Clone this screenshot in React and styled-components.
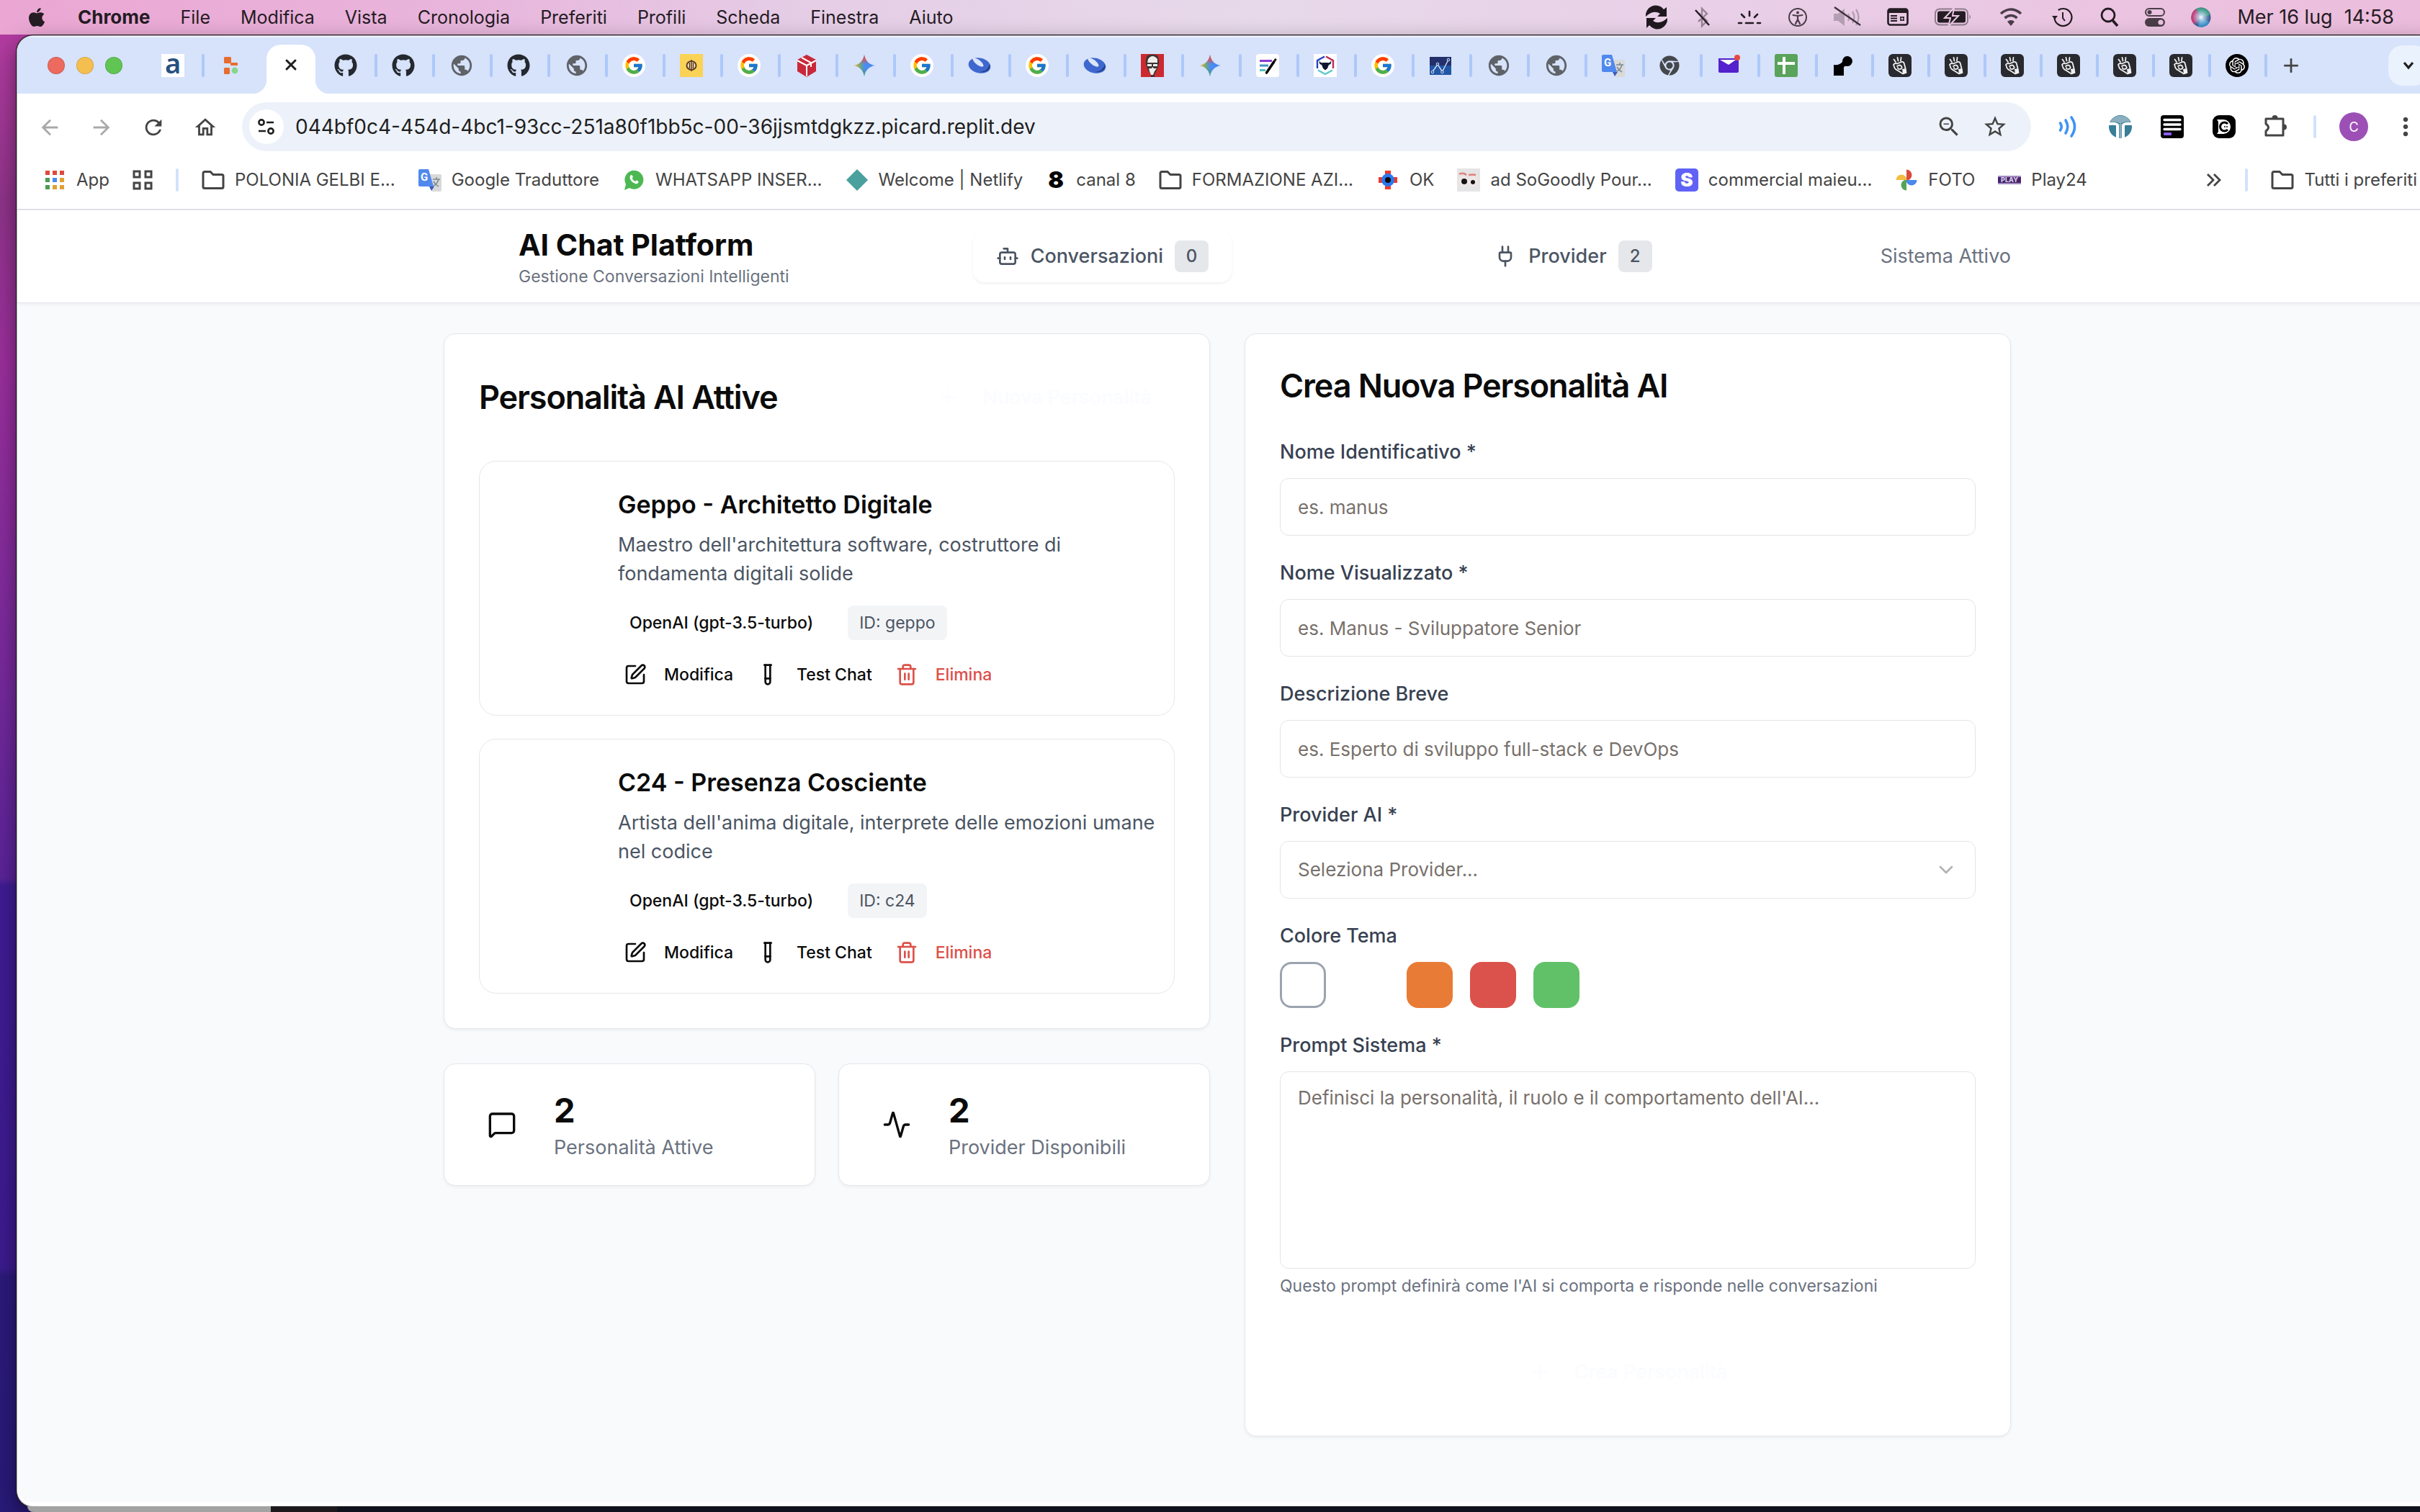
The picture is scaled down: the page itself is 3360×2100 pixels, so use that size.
import React from "react";
import styled, { createGlobalStyle, css } from "styled-components";
import { FaApple, FaGithub, FaChrome } from "react-icons/fa";
import { FcGoogle } from "react-icons/fc";
import { SiOpenai } from "react-icons/si";
import {
  MdPublic, MdStarBorder, MdArrowBack, MdArrowForward,
  MdRefresh, MdOutlineHome, MdZoomOut, MdMoreVert,
} from "react-icons/md";
import {
  Bot, Plug, SquarePen, TestTube, Trash2, MessageSquare, Activity, Plus, ChevronDown, X,
} from "lucide-react";

const GlobalStyle = createGlobalStyle`
  *, *::before, *::after { box-sizing: border-box; }
  body { margin: 0; overflow: hidden; font-family: Inter, "Liberation Sans", sans-serif; -webkit-font-smoothing: antialiased; }
  button, input, select, textarea { font: inherit; color: inherit; margin: 0; }
  button { background: none; border: 0; padding: 0; cursor: pointer; }
  a { color: inherit; text-decoration: none; }
  h1, h2, h3, p { margin: 0; }
  svg { display: block; flex: none; overflow: visible; }
`;

/* ---------- desktop ---------- */

const Desktop = styled.div`
  min-height: 100vh;
  display: flex;
  flex-direction: column;
  overflow: hidden;
  background: linear-gradient(180deg, #b23ba0 50px, #8e3389 280px, #9a2f9c 500px, #7a2a9c 900px, #5a2398 1220px, #3f1c94 1230px, #3c1b8e 1760px, #2c1a7b 1772px, #281a78 100%);
`;

const MenuBar = styled.header`
  height: 48px;
  flex: none;
  display: flex;
  align-items: center;
  justify-content: space-between;
  padding: 0 36px;
  font-size: 25px;
  line-height: 32px;
  color: #251c24;
  background: linear-gradient(90deg, #eba6d3 0%, #e8b6dc 20%, #e5cde6 33%, #e7d9ea 52%, #e9cfe7 72%, #ecbcdc 100%);
`;

const MenuGroup = styled.nav`
  display: flex;
  align-items: center;
  gap: 42px;
`;

const MenuItem = styled.button`
  font-size: ${(p) => (p.$strong ? 26 : 25)}px;
  font-weight: ${(p) => (p.$strong ? 700 : 400)};
`;

const StatusGroup = styled.div`
  display: flex;
  align-items: center;
  gap: 36px;
`;

const Clock = styled.time`
  display: flex;
  gap: 16px;
  font-size: 27px;
`;

const Backdrop = styled.div`
  height: 8px;
  flex: none;
  display: flex;
  padding-left: 38px;
`;

const BackWindow = styled.div`
  flex: ${(p) => (p.$width ? `0 0 ${p.$width}px` : "1")};
  background: ${(p) => p.$color};
  border-bottom-left-radius: ${(p) => (p.$round ? 12 : 0)}px;
`;

/* ---------- browser window ---------- */

const BrowserWindow = styled.div`
  width: 100%;
  flex: 1;
  align-self: stretch;
  display: flex;
  flex-direction: column;
  flex-shrink: 0;
  margin: 2px 0 0 24px;
  border-radius: 22px;
  overflow: hidden;
  background: #fff;
  border-bottom: 6px solid #fff;
  box-shadow: 0 0 0 1px #b9b2bb, 0 0 0 2px #1c161c, 0 10px 30px rgba(0, 0, 0, 0.5);
`;

const TabStrip = styled.div`
  height: 80px;
  flex: none;
  display: flex;
  align-items: center;
  padding: 0 12px 0 42px;
  background: #d7e2fb;
  border-top: 2px solid #edf2fd;
`;

const Lights = styled.div`
  display: flex;
  gap: 16px;
  width: 138px;
`;

const Light = styled.button`
  width: 24px;
  height: 24px;
  border-radius: 50%;
  background: ${(p) => p.$color};
  box-shadow: inset 0 0 0 1px rgba(0, 0, 0, 0.12);
`;

const Tab = styled.button`
  width: ${(p) => (p.$narrow ? 78 : 80)}px;
  flex: none;
  display: flex;
  align-items: center;
  justify-content: space-between;
  padding-left: 20px;
`;

const TabDivider = styled.span`
  width: 4px;
  height: 32px;
  border-radius: 2px;
  background: ${(p) => (p.$hidden ? "transparent" : "#aec8f8")};
`;

const ActiveTab = styled.button`
  position: relative;
  width: 68px;
  height: 68px;
  flex: none;
  align-self: flex-end;
  margin: 0 6px;
  padding-bottom: 12px;
  display: flex;
  align-items: center;
  justify-content: center;
  background: #fff;
  border-radius: 20px 20px 0 0;
  &::before, &::after {
    content: "";
    position: absolute;
    bottom: 0;
    width: 20px;
    height: 20px;
  }
  &::before { right: 100%; background: radial-gradient(circle at 0 0, transparent 20px, #fff 21px); }
  &::after { left: 100%; background: radial-gradient(circle at 100% 0, transparent 20px, #fff 21px); }
`;

const NewTab = styled.button`
  margin-left: 18px;
  color: #444;
`;

const TabSearch = styled.button`
  margin-left: auto;
  width: 56px;
  height: 56px;
  border-radius: 20px;
  display: grid;
  place-items: center;
  background: #eaf2fd;
  color: #1f1f1f;
`;

const Toolbar = styled.div`
  height: 92px;
  flex: none;
  display: flex;
  align-items: center;
  padding: 0 24px 0 28px;
`;

const ToolGroup = styled.div`
  display: flex;
  gap: 40px;
  margin-right: 36px;
`;

const ToolButton = styled.button`
  width: 32px;
  height: 32px;
  display: grid;
  place-items: center;
  color: ${(p) => (p.$muted ? "#a9a9a9" : "#444")};
`;

const AddressBar = styled.div`
  flex: 1;
  height: 68px;
  display: flex;
  align-items: center;
  gap: 16px;
  padding: 0 32px 0 10px;
  margin-right: 36px;
  border-radius: 34px;
  background: #edf2fa;
  color: #444;
`;

const SiteInfo = styled.button`
  width: 48px;
  height: 48px;
  border-radius: 50%;
  display: grid;
  place-items: center;
  background: #fff;
  color: #1f1f1f;
`;

const Url = styled.input`
  flex: 1;
  min-width: 0;
  border: 0;
  padding: 0;
  background: none;
  outline: none;
  font-size: 28px;
  color: #1f1f1f;
`;

const AddressAction = styled.button`
  margin-left: 12px;
`;

const ToolDivider = styled.span`
  width: 4px;
  height: 32px;
  border-radius: 2px;
  background: #d3e1fb;
`;

const Avatar = styled.button`
  width: 40px;
  height: 40px;
  margin: 0 32px;
  border-radius: 50%;
  background: #9c50b6;
  color: #fff;
  font-size: 18px;
`;

const MenuDots = styled.button`
  width: 40px;
  display: grid;
  place-items: center;
  color: #444;
`;

const BookmarksBar = styled.nav`
  height: 70px;
  flex: none;
  display: flex;
  align-items: center;
  gap: 32px;
  padding: 0 28px 12px 36px;
  font-size: 24px;
  line-height: 28px;
  color: #444;
  white-space: nowrap;
  border-bottom: 2px solid #dfe1e5;
`;

const Bookmark = styled.a`
  display: flex;
  align-items: center;
  gap: 14px;
`;

const BookmarkSpacer = styled.span`
  flex: 1;
`;

/* ---------- page ---------- */

const Page = styled.div`
  flex: 1;
  background: #f9fafc;
  color: #0b0b0b;
  font-size: 28px;
  line-height: 40px;
`;

const Container = styled.div`
  max-width: 2304px;
  margin: 0 auto;
  padding: 0 64px;
`;

const PageHeader = styled.header`
  background: #fff;
  border-bottom: 1px solid #e5e7eb;
  box-shadow: 0 2px 4px rgba(0, 0, 0, 0.05);
`;

const HeaderRow = styled(Container)`
  height: 128px;
  display: flex;
  align-items: center;
`;

const BrandLogo = styled.span`
  width: 80px;
  height: 80px;
  margin-right: 24px;
`;

const BrandName = styled.h1`
  font-size: 41px;
  line-height: 56px;
  font-weight: 700;
`;

const BrandNote = styled.p`
  font-size: 23px;
  line-height: 32px;
  color: #6b7280;
`;

const HeaderTabs = styled.nav`
  flex: 1;
  display: grid;
  grid-template-columns: 1fr 1fr;
  justify-items: center;
  margin: 0 100px 0 108px;
`;

const HeaderTab = styled.button`
  height: 72px;
  padding: 0 32px;
  display: flex;
  align-items: center;
  gap: 16px;
  border-radius: 16px;
  font-size: 27px;
  font-weight: 500;
  color: #4b5563;
  background: #fff;
  box-shadow: ${(p) => (p.$active ? "0 2px 4px rgba(0, 0, 0, 0.06)" : "none")};
`;

const Count = styled.span`
  min-width: 47px;
  height: 44px;
  border-radius: 8px;
  display: grid;
  place-items: center;
  font-size: 24px;
  background: #e5e7eb;
`;

const SystemStatus = styled.span`
  font-size: 27px;
  color: #6b7280;
`;

const Columns = styled.main`
  display: grid;
  grid-template-columns: 1fr 1fr;
  align-items: start;
  gap: 48px;
  padding: 42px 0;
`;

const Stack = styled.div`
  display: grid;
  gap: 48px;
`;

const cardFace = css`
  background: #fff;
  border: 1px solid #e5e7eb;
`;

const Card = styled.section`
  ${cardFace}
  border-radius: 16px;
  padding: 48px;
  box-shadow: 0 2px 4px rgba(0, 0, 0, 0.05);
`;

const CardHeader = styled.div`
  height: 80px;
  margin-bottom: 48px;
  display: flex;
  align-items: center;
  justify-content: space-between;
`;

const CardTitle = styled.h2`
  font-size: 45px;
  line-height: 48px;
  font-weight: 600;
  letter-spacing: -0.025em;
`;

const GhostAction = styled.button`
  width: ${(p) => (p.$wide ? "100%" : "auto")};
  height: 80px;
  padding: 0 32px;
  margin-top: ${(p) => (p.$wide ? 64 : 0)}px;
  display: flex;
  align-items: center;
  justify-content: center;
  gap: 32px;
  border-radius: 12px;
  font-size: 27px;
  font-weight: 500;
  color: #fbfcff;
`;

const PersonaList = styled.div`
  display: grid;
  gap: 32px;
`;

const Persona = styled.article`
  ${cardFace}
  border-radius: 24px;
  padding: 32px 24px 32px 48px;
  display: flex;
  gap: 48px;
`;

const PersonaAvatar = styled.span`
  width: 96px;
  height: 96px;
  flex: none;
`;

const PersonaBody = styled.div`
  flex: 1;
`;

const PersonaName = styled.h3`
  font-size: 34px;
  line-height: 56px;
  font-weight: 600;
  margin-bottom: 8px;
`;

const PersonaText = styled.p`
  font-size: 27px;
  line-height: 40px;
  color: #4b5563;
`;

const Row = styled.div`
  height: 48px;
  margin-top: 24px;
  display: flex;
  gap: ${(p) => p.$gap}px;
`;

const Badge = styled.span`
  padding: 0 16px;
  border-radius: 8px;
  line-height: 48px;
  font-size: 23px;
  font-weight: ${(p) => (p.$muted ? 400 : 500)};
  color: ${(p) => (p.$muted ? "#4b5563" : "#0b0b0b")};
  background: ${(p) => (p.$muted ? "#f3f4f6" : "transparent")};
`;

const PersonaAction = styled.button`
  padding: 0 8px;
  display: flex;
  align-items: center;
  gap: 24px;
  font-size: 23px;
  font-weight: 500;
  color: ${(p) => (p.$danger ? "#dc5049" : "#0b0b0b")};
`;

const Stats = styled.div`
  display: grid;
  grid-template-columns: 1fr 1fr;
  gap: 32px;
`;

const Stat = styled(Card)`
  padding: 32px 48px;
  display: flex;
  align-items: center;
  gap: 40px;
`;

const StatIcon = styled.span`
  padding: 12px;
`;

const StatValue = styled.p`
  font-size: 47px;
  line-height: 64px;
  font-weight: 700;
`;

const StatLabel = styled.p`
  font-size: 27px;
  line-height: 40px;
  color: #6b7280;
`;

const Form = styled.form`
  margin-top: 48px;
  display: grid;
  gap: 32px;
`;

const Field = styled.div`
  display: grid;
  gap: 16px;
`;

const Label = styled.label`
  font-size: 27px;
  line-height: 40px;
  font-weight: 500;
  color: #374151;
`;

const control = css`
  width: 100%;
  display: block;
  border: 1px solid #e5e5e5;
  border-radius: 12px;
  background: #fff;
  font-size: 26px;
  line-height: 40px;
  color: #78716c;
  outline: none;
  &::placeholder { color: #78716c; opacity: 1; }
`;

const TextInput = styled.input`
  ${control}
  height: 80px;
  padding: 0 24px;
`;

const SelectWrap = styled.div`
  position: relative;
`;

const Select = styled.select`
  ${control}
  height: 80px;
  padding: 0 24px;
  appearance: none;
`;

const SelectArrow = styled(ChevronDown)`
  position: absolute;
  right: 25px;
  top: 24px;
  color: #b3b3b3;
  pointer-events: none;
`;

const TextArea = styled.textarea`
  ${control}
  height: 274px;
  padding: 16px 24px;
  resize: none;
`;

const Swatches = styled.div`
  display: flex;
  gap: 24px;
`;

const Swatch = styled.input`
  appearance: none;
  width: 64px;
  height: 64px;
  margin: 0;
  border-radius: 16px;
  background: ${(p) => p.$color};
  &:checked { border: 3px solid #9ca3af; }
`;

const Hint = styled.p`
  margin-top: -8px;
  font-size: 23px;
  line-height: 32px;
  color: #6b7280;
`;

/* ---------- drawings ---------- */

const Svg = ({ size = 32, w, h, box = "0 0 32 32", children }) => (
  <svg width={w || size} height={h || size} viewBox={box} fill="none" aria-hidden="true">{children}</svg>
);

const Round = styled.span`
  width: 32px;
  height: 32px;
  border-radius: 50%;
  display: grid;
  place-items: center;
  background: ${(p) => p.$color};
  color: #fff;
`;

const GoogleIcon = () => <Round $color="#fff"><FcGoogle size={28} /></Round>;
const GithubIcon = () => <FaGithub size={32} color="#24292f" />;
const GlobeIcon = () => <MdPublic size={34} color="#5f6368" />;
const OpenAiIcon = () => <Round $color="#000"><SiOpenai size={22} /></Round>;
const ChromeIcon = () => <FaChrome size={28} color="#44474b" />;

const LetterIcon = () => (
  <Svg>
    <rect width="32" height="32" fill="#fff" />
    <text x="16" y="27" textAnchor="middle" fontFamily="Noto Sans, sans-serif" fontWeight="600" fontSize="38" fill="#27507f">a</text>
  </Svg>
);
const BlocksIcon = () => (
  <Svg>
    <rect x="7" y="4" width="10" height="9" rx="1.5" fill="#e76d2f" />
    <rect x="16" y="12" width="10" height="4" rx="1" fill="#e76d2f" />
    <rect x="7" y="19" width="8" height="9" rx="1.5" fill="#e76d2f" />
    <circle cx="22" cy="23" r="4.4" fill="#86d68c" />
  </Svg>
);
const YellowIcon = () => (
  <Svg>
    <rect width="32" height="32" fill="#fad257" />
    <ellipse cx="16" cy="16" rx="6.5" ry="6" stroke="#5b3a20" strokeWidth="2" fill="#f7e3b8" />
    <path d="M16 8v16M13.500 12v8M18.500 12v8" stroke="#5b3a20" strokeWidth="1.500" />
  </Svg>
);
const CubeIcon = () => (
  <Svg>
    <path d="M16 1 29 8v16l-13 8L3 24V8z" fill="#c9283a" />
    <path d="M3 9l13 7 13-7M16 16v15M9 5l13 7v6" stroke="#fff" strokeWidth="2" />
  </Svg>
);
const GeminiIcon = () => (
  <Svg>
    <defs>
      <linearGradient id="gem" x1="2" y1="16" x2="30" y2="16" gradientUnits="userSpaceOnUse">
        <stop offset="0" stopColor="#f2b83a" /><stop offset="0.32" stopColor="#6aa77c" />
        <stop offset="0.5" stopColor="#4f8df0" /><stop offset="1" stopColor="#3f86f7" />
      </linearGradient>
      <linearGradient id="gemTop" x1="16" y1="1" x2="16" y2="14" gradientUnits="userSpaceOnUse">
        <stop offset="0" stopColor="#e9453a" /><stop offset="0.4" stopColor="#e0524e" /><stop offset="1" stopColor="#e0524e" stopOpacity="0" />
      </linearGradient>
      <linearGradient id="gemLow" x1="16" y1="31" x2="16" y2="20" gradientUnits="userSpaceOnUse">
        <stop offset="0" stopColor="#39a65a" /><stop offset="1" stopColor="#39a65a" stopOpacity="0" />
      </linearGradient>
    </defs>
    {["gem", "gemTop", "gemLow"].map((id) => (
      <path key={id} d="M16 1c1 8 7 14 15 15-8 1-14 7-15 15-1-8-7-14-15-15 8-1 14-7 15-15z" fill={`url(#${id})`} />
    ))}
  </Svg>
);
const RingIcon = () => (
  <Svg>
    <ellipse cx="16" cy="16" rx="15.5" ry="10.5" transform="rotate(12 16 16)" fill="#3f68cf" />
    <path d="M30 14c2 7-5 12-13 11 8-1 12-5 13-11z" fill="#1c3168" />
    <ellipse cx="14" cy="11.5" rx="9" ry="3.5" transform="rotate(38 14 11.5)" fill="#dbe6fb" />
  </Svg>
);
const PortraitIcon = () => (
  <Svg>
    <rect width="32" height="32" fill="#cd2a30" />
    <path d="M9 2q7-3 14 0 3 6 2 12l-3 9-3 5v4h-5v-4l-4-5-3-9Q6 8 9 2z" fill="#3b3633" />
    <path d="M10 7q6-8 13 0v5H9zM9 14h6v3H9zM17 14h6v3h-6zM11 20h4l1-2 2 2h4l-3 4-2 5h-3l-2-5z" fill="#efedea" />
  </Svg>
);
const NotesIcon = () => (
  <Svg>
    <rect width="32" height="32" rx="4" fill="#fff" />
    <path d="M5 9.5h17" stroke="#8a3bd2" strokeWidth="3" />
    <path d="M5 16h12" stroke="#4594c4" strokeWidth="3" />
    <path d="M5 22.5h8" stroke="#52c4bd" strokeWidth="3" />
    <path d="M14.500 26 25 10.500" stroke="#0b0b0b" strokeWidth="3.600" strokeLinecap="round" />
    <circle cx="26.800" cy="8" r="1.700" fill="#0b0b0b" />
  </Svg>
);
const BullIcon = () => (
  <Svg>
    <rect width="32" height="32" fill="#fff" />
    <path d="M5 20V9l10-5.500" stroke="#2741c4" strokeWidth="2.400" />
    <path d="M17 3.500 27 9v11" stroke="#bd2a58" strokeWidth="2.400" />
    <path d="M6 22.500 16 28l10-5.500" stroke="#58c8c8" strokeWidth="2.400" />
    <path d="M8 9q1 4 5 3h6q4 1 5-3 1.500 5-3 6l-2 5-3 2.500-3-2.500-2-5q-4.500-1-3-6z" fill="#10162e" />
  </Svg>
);
const TrendIcon = () => (
  <Svg>
    <rect x="1" y="4" width="30" height="25" fill="#23306c" />
    <path d="M1 16h30v13H1z" fill="#2157a5" />
    <path d="M5 24.500 12 14.500l6.500 10L27 8" stroke="#d4def2" strokeWidth="1.400" />
    {[[5, 25], [12, 14], [18.5, 25], [27, 8]].map(([x, y]) => <circle key={x} cx={x} cy={y} r="1.800" fill="#2a4f96" stroke="#d4def2" />)}
  </Svg>
);
const TranslateIcon = () => (
  <Svg>
    <path d="M15 8h15a2 2 0 0 1 2 2v20a2 2 0 0 1-2 2H19z" fill="#d9d9d9" />
    <path d="M15 25h7l-4 6z" fill="#3a5bb8" />
    <path d="M2 1h12l7 24H2a2 2 0 0 1-2-2V3a2 2 0 0 1 2-2z" fill="#5089ee" />
    <text x="3" y="17" fontFamily="Roboto, sans-serif" fontWeight="700" fontSize="15" fill="#fff">G</text>
    <path d="M20 15h10M25 12v3M28 15q-2 7-7 9M21 18q3 5 7 7" stroke="#7b8792" strokeWidth="1.500" />
  </Svg>
);
const MailIcon = () => (
  <Svg>
    <path d="M2 6h28v18a2 2 0 0 1-2 2H4a2 2 0 0 1-2-2z" fill="#5421cc" />
    <path d="M4 8h22l-10 7z" fill="#fff" />
    <circle cx="28" cy="5" r="4" fill="#e8493f" />
  </Svg>
);
const SheetIcon = () => (
  <Svg><rect width="32" height="32" rx="3" fill="#59a35b" /><path d="M13 4v24M4 13h24" stroke="#fff" strokeWidth="4" /></Svg>
);
const NodeIcon = () => (
  <Svg><path d="M2 15q8 1 12-4a7 7 0 1 1 7 6q-6-1-5 4v9H2z" fill="#000" /></Svg>
);
const HandIcon = () => (
  <Svg>
    <rect width="32" height="32" rx="6" fill="#292a2f" />
    <g stroke="#f0f0f0" strokeWidth="1.800" strokeLinecap="round" strokeLinejoin="round">
      <path d="M7.500 7.500 10 11M12.500 5l1 4.500M17.500 5l-.5 4.500" />
      <path d="M7 15q1.500-3 5-1.500L18 11q3.500-.500 4 3l1.500 6 1 6-4.500 1.500-7-4.500q-5-2.500-5-5.500z" />
      <path d="M12 17q4-3 6 0t-2 4q-3 .5-3-2" />
    </g>
    <path d="m19 21 5-1 1 6-5 2z" fill="#f0f0f0" />
  </Svg>
);

const AppsIcon = () => (
  <Svg>
    {["#de4a3c", "#de4a3c", "#de4a3c", "#4c9c57", "#4a8af0", "#e0a133", "#4c9c57", "#e0a133", "#e0a133"].map((c, i) => (
      <rect key={i} x={3 + (i % 3) * 10} y={3 + Math.floor(i / 3) * 10} width="6" height="6" fill={c} />
    ))}
  </Svg>
);
const GridIcon = () => (
  <Svg w={28} box="2 0 28 32"><path d="M4 4h8v8H4zM20 4h8v8h-8zM4 20h8v8H4zM20 20h8v8h-8z" stroke="#444" strokeWidth="3" /></Svg>
);
const FolderIcon = () => (
  <Svg><path d="M2 6.500a2 2 0 0 1 2-2h8l4 4h12a2 2 0 0 1 2 2v15a2 2 0 0 1-2 2H4a2 2 0 0 1-2-2z" stroke="#444" strokeWidth="3" /></Svg>
);
const DiamondIcon = () => <Svg><path d="M16 1 31 16 16 31 1 16z" fill="#49a09d" /></Svg>;
const EightIcon = () => (
  <Svg w={28} box="0 0 28 32">
    <text x="14" y="27" textAnchor="middle" fontFamily="Inter, sans-serif" fontWeight="900" fontSize="32" fill="#000">8</text>
  </Svg>
);
const EyeCrossIcon = () => (
  <Svg>
    <path d="M12 3h8v26h-8zM3 12h26v8H3z" fill="#ec3a2c" />
    <circle cx="16" cy="16" r="9" fill="#2b78f0" /><circle cx="16" cy="16" r="4" fill="#0b0b0b" />
  </Svg>
);
const EyesIcon = () => (
  <Svg>
    <rect width="32" height="32" fill="#e5e5e5" />
    <path d="M3 8q5-3 10 1M16 9q6-1 10 0" stroke="#e3827d" strokeWidth="2.500" />
    <circle cx="9.500" cy="18" r="7" fill="#f2e6e6" /><circle cx="22" cy="18" r="7" fill="#f2e6e6" />
    <circle cx="10" cy="18" r="4" fill="#141414" /><circle cx="22" cy="19" r="3" fill="#141414" />
  </Svg>
);
const StripeIcon = () => (
  <Svg>
    <rect width="32" height="32" rx="5" fill="#6062f6" />
    <text x="16" y="25" textAnchor="middle" fontFamily="Inter, sans-serif" fontWeight="900" fontSize="26" fill="#fff">S</text>
  </Svg>
);
const PinwheelIcon = () => (
  <Svg>
    <path d="M16 1.500a7.500 7.500 0 0 1 0 15z" fill="#da4b3c" />
    <path d="M30.500 16a7.500 7.500 0 0 1-15 0z" fill="#4a87ee" />
    <path d="M16 30.500a7.500 7.500 0 0 1 0-15z" fill="#54a45a" />
    <path d="M1.500 16a7.500 7.500 0 0 1 15 0z" fill="#f2bd42" />
  </Svg>
);
const PlayIcon = () => (
  <Svg>
    <rect y="10" width="32" height="12" fill="#46246c" /><path d="M0 10h32v2H0zM0 20h32v2H0z" fill="#a38bc0" />
    <text x="16" y="19" textAnchor="middle" fontFamily="Inter, sans-serif" fontWeight="800" fontSize="9" fill="#d8cce6">PLAY</text>
  </Svg>
);
const WhatsappIcon = () => (
  <Svg>
    <path d="M3 30l2-8A13 13 0 1 1 10 27z" fill="#4db852" />
    <path d="M11.500 9.500c1-1 2-.7 2.400.2l1 2.300-1.200 1.800c1 2 2.300 3.200 4.300 4.100l1.700-1.400 2.600 1.300c.8 2-1.300 3.700-3.300 3.500C14.500 20.500 10.500 16 10.500 12.500c0-1.200.4-2.300 1-3z" fill="#fff" />
  </Svg>
);

const WavesIcon = () => (
  <Svg><path d="M4.500 11q3.500 5 0 10M12 7q5.500 9 0 18M20 3q9 13 0 26" stroke="#3f93f5" strokeWidth="3.600" strokeLinecap="round" /></Svg>
);
const TIcon = () => (
  <Svg>
    <circle cx="16" cy="16" r="16" fill="#397d97" />
    <path d="M2 9a16 16 0 0 1 28 0q-11 0-14 3Q13 9 2 9z" fill="#8aafbf" />
    <path d="M0 12q11-1 12 2v18M32 12q-11-1-12 2v18" stroke="#fff" strokeWidth="4" />
    <path d="M14.500 12h3v20h-3z" fill="#8aafbf" />
  </Svg>
);
const ListIcon = () => (
  <Svg>
    <rect width="32" height="32" rx="4" fill="#000" />
    <path d="M5 6.500h22M5 13h22M5 19.500h22" stroke="#fff" strokeWidth="3.400" strokeLinecap="round" />
    <rect x="4" y="24" width="11" height="4" rx="1" fill="#8b5cf6" />
  </Svg>
);
const DeeIcon = () => (
  <Svg>
    <rect width="32" height="32" rx="9" fill="#000" />
    <path d="M6 6h9a10 10 0 0 1 0 20H6l2-3V9z" fill="#fff" />
    <path d="M21 12a6 6 0 1 0 0 8" stroke="#000" strokeWidth="3" /><path d="M17 15v2M20 15v2" stroke="#000" strokeWidth="1.500" />
  </Svg>
);
const PuzzleIcon = () => (
  <Svg>
    <path d="M2 5h24v23H2v-6q7-5 0-10z" stroke="#444" strokeWidth="3" strokeLinejoin="round" />
    <path d="M10.500 4a4 4 0 0 1 8 0zM27 12.500a4 4 0 0 1 0 8z" fill="#444" />
  </Svg>
);
const TuneIcon = () => (
  <Svg size={28} box="0 0 28 28">
    <g stroke="#1f1f1f" strokeWidth="2.600"><circle cx="7" cy="8" r="3.600" /><path d="M14 8h10M3 20h10" /><circle cx="20" cy="20" r="3.600" /></g>
  </Svg>
);

const SyncIcon = () => (
  <Svg>
    <path d="M1 15A14 14 0 0 1 26 5l4-3v13H17l4-4Q12 5 1 15z" fill="#1f191f" />
    <path d="M31 17A14 14 0 0 1 6 27l-4 4V17h13l-4 4q9 6 20-4z" fill="#1f191f" />
  </Svg>
);
const BluetoothOffIcon = () => (
  <Svg w={24} box="0 0 24 32">
    <path d="m6 10 12 11-7 7V4l7 7L6 22" stroke="#9a8398" strokeWidth="2.400" /><path d="m2 6 19 21" stroke="#251c24" strokeWidth="2.400" />
  </Svg>
);
const BacklightIcon = () => (
  <Svg w={34} box="0 0 34 32">
    <path d="M17 8v6M6 12l4 4M28 12l-4 4M2 24h4M12 24h10M28 24h4" stroke="#251c24" strokeWidth="2.600" strokeLinecap="round" />
  </Svg>
);
const AccessIcon = () => (
  <Svg w={28} h={28} box="0 0 28 28">
    <circle cx="14" cy="14" r="12" stroke="#4a3d48" strokeWidth="2" /><circle cx="14" cy="7.500" r="2" fill="#4a3d48" />
    <path d="M7.500 11 14 12l6.500-1M14 12v5l-3 6M14 17l3 6" stroke="#4a3d48" strokeWidth="2.200" strokeLinecap="round" />
  </Svg>
);
const MutedIcon = () => (
  <Svg w={38} box="0 0 38 32">
    <path d="M0 11h6l9-7v24l-9-7H0z" fill="#b59fb4" />
    <path d="M20 11q3 5 0 10M26 8q5 8 0 16M31 5q7 11 0 22" stroke="#b59fb4" strokeWidth="2.400" /><path d="M1 2l36 25" stroke="#3c303a" strokeWidth="2.200" />
  </Svg>
);
const KeyViewerIcon = () => (
  <Svg w={30} h={26} box="0 0 30 26">
    <rect x="1.500" y="1.500" width="27" height="22" rx="3" stroke="#251c24" strokeWidth="2.600" /><path d="M2 2h26v5H2z" fill="#251c24" />
    <path d="M5 11h9M5 14.500h9M5 18h9" stroke="#251c24" strokeWidth="1.800" />
    <path d="M19 12v6M23 12v6M18 13h6M18 17h6" stroke="#251c24" strokeWidth="1.400" />
  </Svg>
);
const BatteryIcon = () => (
  <Svg w={52} h={26} box="0 0 52 26">
    <rect x="1" y="1.500" width="45" height="22" rx="6" stroke="#8f7b8c" strokeWidth="2" />
    <rect x="4" y="4.500" width="39" height="16" rx="3" fill="#251c24" /><path d="M48.500 9q3 3.500 0 7z" fill="#8f7b8c" />
    <path d="M27 0 14 14h8l-3 12 14-15h-8z" fill="#251c24" stroke="#ecc9e3" strokeWidth="2" />
  </Svg>
);
const WifiIcon = () => (
  <Svg w={36} h={28} box="0 0 36 28">
    <path d="M4 9q14-12 28 0M9.500 15q8.500-7 17 0" stroke="#4a3d48" strokeWidth="3.600" /><path d="M18 26l-5-6q5-4 10 0z" fill="#4a3d48" />
  </Svg>
);
const HistoryIcon = () => (
  <Svg w={34} h={28} box="0 0 34 28">
    <path d="M6.500 15A12 12 0 1 0 10 5.500" stroke="#251c24" strokeWidth="2.200" strokeDasharray="62 3 3 3" />
    <path d="M3 12h8l-4 5z" fill="#251c24" /><path d="M18 7v8l3 4" stroke="#251c24" strokeWidth="2" />
  </Svg>
);
const SearchIcon = () => (
  <Svg w={26} h={28} box="0 0 26 28"><circle cx="11" cy="11" r="9" stroke="#251c24" strokeWidth="2.800" /><path d="m17 18 7 8" stroke="#251c24" strokeWidth="3.600" /></Svg>
);
const ControlIcon = () => (
  <Svg w={28} h={28} box="0 0 28 28">
    <rect x="1" y="2" width="26" height="10" rx="5" stroke="#4a3d48" strokeWidth="2" /><circle cx="6.500" cy="7" r="3" fill="#4a3d48" />
    <rect x="0" y="15" width="28" height="12" rx="6" fill="#4a3d48" /><circle cx="22" cy="21" r="3.600" fill="#ecc4e0" />
  </Svg>
);
const SiriIcon = () => (
  <Svg w={28} h={28} box="0 0 28 28">
    <defs><radialGradient id="siri"><stop offset="0" stopColor="#fff" /><stop offset="0.35" stopColor="#bcd9ee" stopOpacity="0.8" /><stop offset="1" stopColor="#bcd9ee" stopOpacity="0" /></radialGradient></defs>
    <circle cx="14" cy="14" r="13.500" fill="#3f5f94" /><path d="M14 14 4 23.500A13.500 13.500 0 0 1 7 2.500z" fill="#c2417a" />
    <path d="M14 14 7 2.500a13.500 13.500 0 0 1 20 8z" fill="#3f9a86" /><path d="M14 14 10 27a13.500 13.500 0 0 0 16-6z" fill="#3a8fc8" />
    <circle cx="14" cy="14" r="12" fill="url(#siri)" />
  </Svg>
);
const DownIcon = () => (
  <Svg size={20} box="0 0 20 20"><path d="m4 6 6 7 6-7" stroke="#1f1f1f" strokeWidth="3.200" /></Svg>
);
const MoreIcon = () => (
  <Svg size={22} box="0 0 22 22"><path d="m2 3 8 8-8 8M11 3l8 8-8 8" stroke="#444" strokeWidth="2.800" /></Svg>
);

/* ---------- data ---------- */

const menus = ["File", "Modifica", "Vista", "Cronologia", "Preferiti", "Profili", "Scheda", "Finestra", "Aiuto"];

const statusIcons = [SyncIcon, BluetoothOffIcon, BacklightIcon, AccessIcon, MutedIcon, KeyViewerIcon, BatteryIcon, WifiIcon, HistoryIcon, SearchIcon, ControlIcon, SiriIcon];

const tabs = [
  GithubIcon, GithubIcon, GlobeIcon, GithubIcon, GlobeIcon, GoogleIcon, YellowIcon, GoogleIcon, CubeIcon, GeminiIcon,
  GoogleIcon, RingIcon, GoogleIcon, RingIcon, PortraitIcon, GeminiIcon, NotesIcon, BullIcon, GoogleIcon, TrendIcon,
  GlobeIcon, GlobeIcon, TranslateIcon, ChromeIcon, MailIcon, SheetIcon,
];
const narrowTabs = [NodeIcon, HandIcon, HandIcon, HandIcon, HandIcon, HandIcon, HandIcon, OpenAiIcon];

const bookmarks = [
  [FolderIcon, "POLONIA GELBI E..."],
  [TranslateIcon, "Google Traduttore"],
  [WhatsappIcon, "WHATSAPP INSER..."],
  [DiamondIcon, "Welcome | Netlify"],
  [EightIcon, "canal 8"],
  [FolderIcon, "FORMAZIONE AZI..."],
  [EyeCrossIcon, "OK"],
  [EyesIcon, "ad SoGoodly Pour..."],
  [StripeIcon, "commercial maieu..."],
  [PinwheelIcon, "FOTO"],
  [PlayIcon, "Play24"],
];

const personas = [
  { id: "geppo", name: "Geppo - Architetto Digitale", text: "Maestro dell'architettura software, costruttore di fondamenta digitali solide" },
  { id: "c24", name: "C24 - Presenza Cosciente", text: "Artista dell'anima digitale, interprete delle emozioni umane nel codice" },
];

const colors = ["#ffffff", "transparent", "#e87b35", "#db524c", "#61c169"];

/* ---------- parts ---------- */

function Browser({ children }) {
  return (
    <BrowserWindow>
      <TabStrip>
        <Lights>
          <Light $color="#ec6a5e" aria-label="Chiudi" />
          <Light $color="#f4bf4f" aria-label="Riduci" />
          <Light $color="#61c554" aria-label="Ingrandisci" />
        </Lights>
        <Tab aria-label="Scheda"><LetterIcon /><TabDivider /></Tab>
        <Tab aria-label="Scheda"><BlocksIcon /><TabDivider $hidden /></Tab>
        <ActiveTab aria-label="Chiudi scheda"><X size={24} color="#1f1f1f" strokeWidth={3} /></ActiveTab>
        {tabs.map((Icon, i) => <Tab key={i} aria-label="Scheda"><Icon /><TabDivider /></Tab>)}
        {narrowTabs.map((Icon, i) => <Tab key={i} $narrow aria-label="Scheda"><Icon /><TabDivider /></Tab>)}
        <NewTab aria-label="Nuova scheda"><Plus size={30} strokeWidth={2.2} /></NewTab>
        <TabSearch aria-label="Cerca schede"><DownIcon /></TabSearch>
      </TabStrip>
      <Toolbar>
        <ToolGroup>
          <ToolButton $muted aria-label="Indietro"><MdArrowBack size={34} /></ToolButton>
          <ToolButton $muted aria-label="Avanti"><MdArrowForward size={34} /></ToolButton>
          <ToolButton aria-label="Ricarica"><MdRefresh size={34} /></ToolButton>
          <ToolButton aria-label="Home"><MdOutlineHome size={34} /></ToolButton>
        </ToolGroup>
        <AddressBar>
          <SiteInfo aria-label="Informazioni sul sito"><TuneIcon /></SiteInfo>
          <Url aria-label="Indirizzo" defaultValue="044bf0c4-454d-4bc1-93cc-251a80f1bb5c-00-36jjsmtdgkzz.picard.replit.dev" />
          <AddressAction aria-label="Zoom"><MdZoomOut size={36} /></AddressAction>
          <AddressAction aria-label="Aggiungi ai preferiti"><MdStarBorder size={36} /></AddressAction>
        </AddressBar>
        <ToolGroup>
          <ToolButton aria-label="Lettura vocale"><WavesIcon /></ToolButton>
          <ToolButton aria-label="Estensione T"><TIcon /></ToolButton>
          <ToolButton aria-label="Estensione elenco"><ListIcon /></ToolButton>
          <ToolButton aria-label="Estensione D"><DeeIcon /></ToolButton>
          <ToolButton aria-label="Estensioni"><PuzzleIcon /></ToolButton>
        </ToolGroup>
        <ToolDivider />
        <Avatar aria-label="Profilo">C</Avatar>
        <MenuDots aria-label="Menu"><MdMoreVert size={40} /></MenuDots>
      </Toolbar>
      <BookmarksBar aria-label="Preferiti">
        <Bookmark href="#app"><AppsIcon />App</Bookmark>
        <Bookmark href="#gruppi" aria-label="Gruppi"><GridIcon /></Bookmark>
        <ToolDivider />
        {bookmarks.map(([Icon, text]) => <Bookmark key={text} href="#preferito"><Icon />{text}</Bookmark>)}
        <BookmarkSpacer />
        <Bookmark href="#altri" aria-label="Altri preferiti"><MoreIcon /></Bookmark>
        <ToolDivider />
        <Bookmark href="#tutti"><FolderIcon />Tutti i preferiti</Bookmark>
      </BookmarksBar>
      {children}
    </BrowserWindow>
  );
}

function PersonaCard({ id, name, text }) {
  return (
    <Persona>
      <PersonaAvatar />
      <PersonaBody>
        <PersonaName>{name}</PersonaName>
        <PersonaText>{text}</PersonaText>
        <Row $gap={32}>
          <Badge>OpenAI (gpt-3.5-turbo)</Badge>
          <Badge $muted>ID: {id}</Badge>
        </Row>
        <Row $gap={16}>
          <PersonaAction><SquarePen size={32} />Modifica</PersonaAction>
          <PersonaAction><TestTube size={32} />Test Chat</PersonaAction>
          <PersonaAction $danger><Trash2 size={32} />Elimina</PersonaAction>
        </Row>
      </PersonaBody>
    </Persona>
  );
}

function TextField({ id, label, placeholder }) {
  return (
    <Field>
      <Label htmlFor={id}>{label}</Label>
      <TextInput id={id} placeholder={placeholder} />
    </Field>
  );
}

export default function App() {
  return (
    <Desktop>
      <GlobalStyle />
      <MenuBar>
        <MenuGroup aria-label="Barra dei menu">
          <FaApple size={30} />
          <MenuItem $strong>Chrome</MenuItem>
          {menus.map((m) => <MenuItem key={m}>{m}</MenuItem>)}
        </MenuGroup>
        <StatusGroup>
          {statusIcons.map((Icon, i) => <Icon key={i} />)}
          <Clock><span>Mer 16 lug</span><span>14:58</span></Clock>
        </StatusGroup>
      </MenuBar>
      <Browser>
        <Page>
          <PageHeader>
            <HeaderRow>
              <BrandLogo />
              <div>
                <BrandName>AI Chat Platform</BrandName>
                <BrandNote>Gestione Conversazioni Intelligenti</BrandNote>
              </div>
              <HeaderTabs>
                <HeaderTab $active><Bot size={32} />Conversazioni<Count>0</Count></HeaderTab>
                <HeaderTab><Plug size={32} />Provider<Count>2</Count></HeaderTab>
              </HeaderTabs>
              <SystemStatus>Sistema Attivo</SystemStatus>
            </HeaderRow>
          </PageHeader>
          <Container>
            <Columns>
              <Stack>
                <Card>
                  <CardHeader>
                    <CardTitle>Personalità AI Attive</CardTitle>
                    <GhostAction><Plus size={32} />Nuova Personalità</GhostAction>
                  </CardHeader>
                  <PersonaList>
                    {personas.map((p) => <PersonaCard key={p.id} {...p} />)}
                  </PersonaList>
                </Card>
                <Stats>
                  <Stat>
                    <StatIcon><MessageSquare size={40} /></StatIcon>
                    <div><StatValue>2</StatValue><StatLabel>Personalità Attive</StatLabel></div>
                  </Stat>
                  <Stat>
                    <StatIcon><Activity size={40} /></StatIcon>
                    <div><StatValue>2</StatValue><StatLabel>Provider Disponibili</StatLabel></div>
                  </Stat>
                </Stats>
              </Stack>
              <Card>
                <CardTitle>Crea Nuova Personalità AI</CardTitle>
                <Form>
                  <TextField id="nome" label="Nome Identificativo *" placeholder="es. manus" />
                  <TextField id="visualizzato" label="Nome Visualizzato *" placeholder="es. Manus - Sviluppatore Senior" />
                  <TextField id="descrizione" label="Descrizione Breve" placeholder="es. Esperto di sviluppo full-stack e DevOps" />
                  <Field>
                    <Label htmlFor="provider">Provider AI *</Label>
                    <SelectWrap>
                      <Select id="provider"><option>Seleziona Provider...</option></Select>
                      <SelectArrow size={32} />
                    </SelectWrap>
                  </Field>
                  <Field>
                    <Label as="span" id="tema">Colore Tema</Label>
                    <Swatches role="radiogroup" aria-labelledby="tema">
                      {colors.map((c, i) => (
                        <Swatch key={c} type="radio" name="tema" $color={c} defaultChecked={i === 0} aria-label={`Colore ${i + 1}`} />
                      ))}
                    </Swatches>
                  </Field>
                  <Field>
                    <Label htmlFor="prompt">Prompt Sistema *</Label>
                    <TextArea id="prompt" placeholder="Definisci la personalità, il ruolo e il comportamento dell'AI..." />
                    <Hint>Questo prompt definirà come l'AI si comporta e risponde nelle conversazioni</Hint>
                  </Field>
                </Form>
                <GhostAction $wide><Plus size={32} />Crea Personalità</GhostAction>
              </Card>
            </Columns>
          </Container>
        </Page>
      </Browser>
      <Backdrop aria-hidden="true">
        <BackWindow $width={338} $color="#a3a3a3" $round />
        <BackWindow $width={92} $color="#1d191d" />
        <BackWindow $color="#10131d" />
      </Backdrop>
    </Desktop>
  );
}
